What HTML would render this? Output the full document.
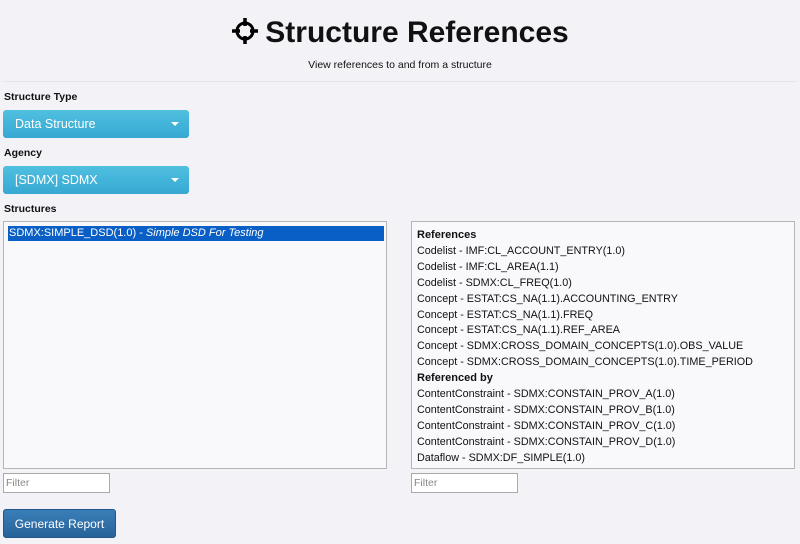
<!DOCTYPE html>
<html><head><style>
body{margin:0;width:800px;height:544px;background:#f3f3f7;font-family:"Liberation Sans",Arial,sans-serif;color:#111;position:relative;overflow:hidden}
.a{position:absolute}
h1{position:absolute;left:0;width:800px;top:13px;margin:0;text-align:center;font-size:30px;font-weight:bold;line-height:40px}
.sub{left:0;width:800px;text-align:center;top:59px;font-size:10.5px}
.hr{left:3px;width:794px;top:81px;height:1px;background:#e6e6ea}
.lbl{font-size:10.5px;font-weight:bold;left:4px}
.dd{left:3px;width:186px;height:28px;border-radius:3px;background:linear-gradient(#50c0e0,#36a8d2);color:#fff;font-size:12.5px;line-height:28px;box-sizing:border-box;padding-left:12px}
.dd:after{content:"";position:absolute;right:10px;top:12px;border-left:4px solid transparent;border-right:4px solid transparent;border-top:4px solid #fff}
.box{background:#f9f9fb;border:1px solid #b5b5b5;box-sizing:border-box;top:221px;height:248px}
.sel{position:absolute;left:4px;top:4px;width:376px;height:15px;background:#0a5fc6;color:#fff;font-size:11px;line-height:15px;padding-left:1px;box-sizing:border-box}
.refs{font-size:10.8px;line-height:15.9px;padding:6px 0 0 5px}
.refs b{font-weight:bold;font-size:11px}
.flt{background:#fff;border:1px solid #aaa;box-sizing:border-box;height:20px;width:107px;top:473px;font-size:10.5px;color:#888;line-height:18px;padding-left:2px}
.btn{left:3px;top:509px;width:113px;height:29px;border-radius:3px;background:linear-gradient(#3a7fb8,#27629a);color:#fff;font-size:12px;line-height:29px;text-align:center;border:1px solid #21578a;box-sizing:border-box}
</style></head><body>
<h1><svg width="28" height="28" viewBox="0 0 28 28" style="vertical-align:-3px;margin-right:6px"><circle cx="14" cy="14" r="8" fill="none" stroke="#000" stroke-width="3"/><path d="M14 1v8M14 19v8M1 14h8M19 14h8" stroke="#000" stroke-width="3.5"/></svg>Structure References</h1>
<div class="a sub">View references to and from a structure</div>
<div class="a hr"></div>
<div class="a lbl" style="top:91px">Structure Type</div>
<div class="a dd" style="top:110px">Data Structure</div>
<div class="a lbl" style="top:147px">Agency</div>
<div class="a dd" style="top:166px">[SDMX] SDMX</div>
<div class="a lbl" style="top:203px">Structures</div>
<div class="a box" style="left:3px;width:384px"><div class="sel">SDMX:SIMPLE_DSD(1.0) - <i>Simple DSD For Testing</i></div></div>
<div class="a box" style="left:411px;width:384px"><div class="refs">
<b>References</b><br>
Codelist - IMF:CL_ACCOUNT_ENTRY(1.0)<br>
Codelist - IMF:CL_AREA(1.1)<br>
Codelist - SDMX:CL_FREQ(1.0)<br>
Concept - ESTAT:CS_NA(1.1).ACCOUNTING_ENTRY<br>
Concept - ESTAT:CS_NA(1.1).FREQ<br>
Concept - ESTAT:CS_NA(1.1).REF_AREA<br>
Concept - SDMX:CROSS_DOMAIN_CONCEPTS(1.0).OBS_VALUE<br>
Concept - SDMX:CROSS_DOMAIN_CONCEPTS(1.0).TIME_PERIOD<br>
<b>Referenced by</b><br>
ContentConstraint - SDMX:CONSTAIN_PROV_A(1.0)<br>
ContentConstraint - SDMX:CONSTAIN_PROV_B(1.0)<br>
ContentConstraint - SDMX:CONSTAIN_PROV_C(1.0)<br>
ContentConstraint - SDMX:CONSTAIN_PROV_D(1.0)<br>
Dataflow - SDMX:DF_SIMPLE(1.0)
</div></div>
<div class="a flt" style="left:3px">Filter</div>
<div class="a flt" style="left:411px">Filter</div>
<div class="a btn">Generate Report</div>
</body></html>
